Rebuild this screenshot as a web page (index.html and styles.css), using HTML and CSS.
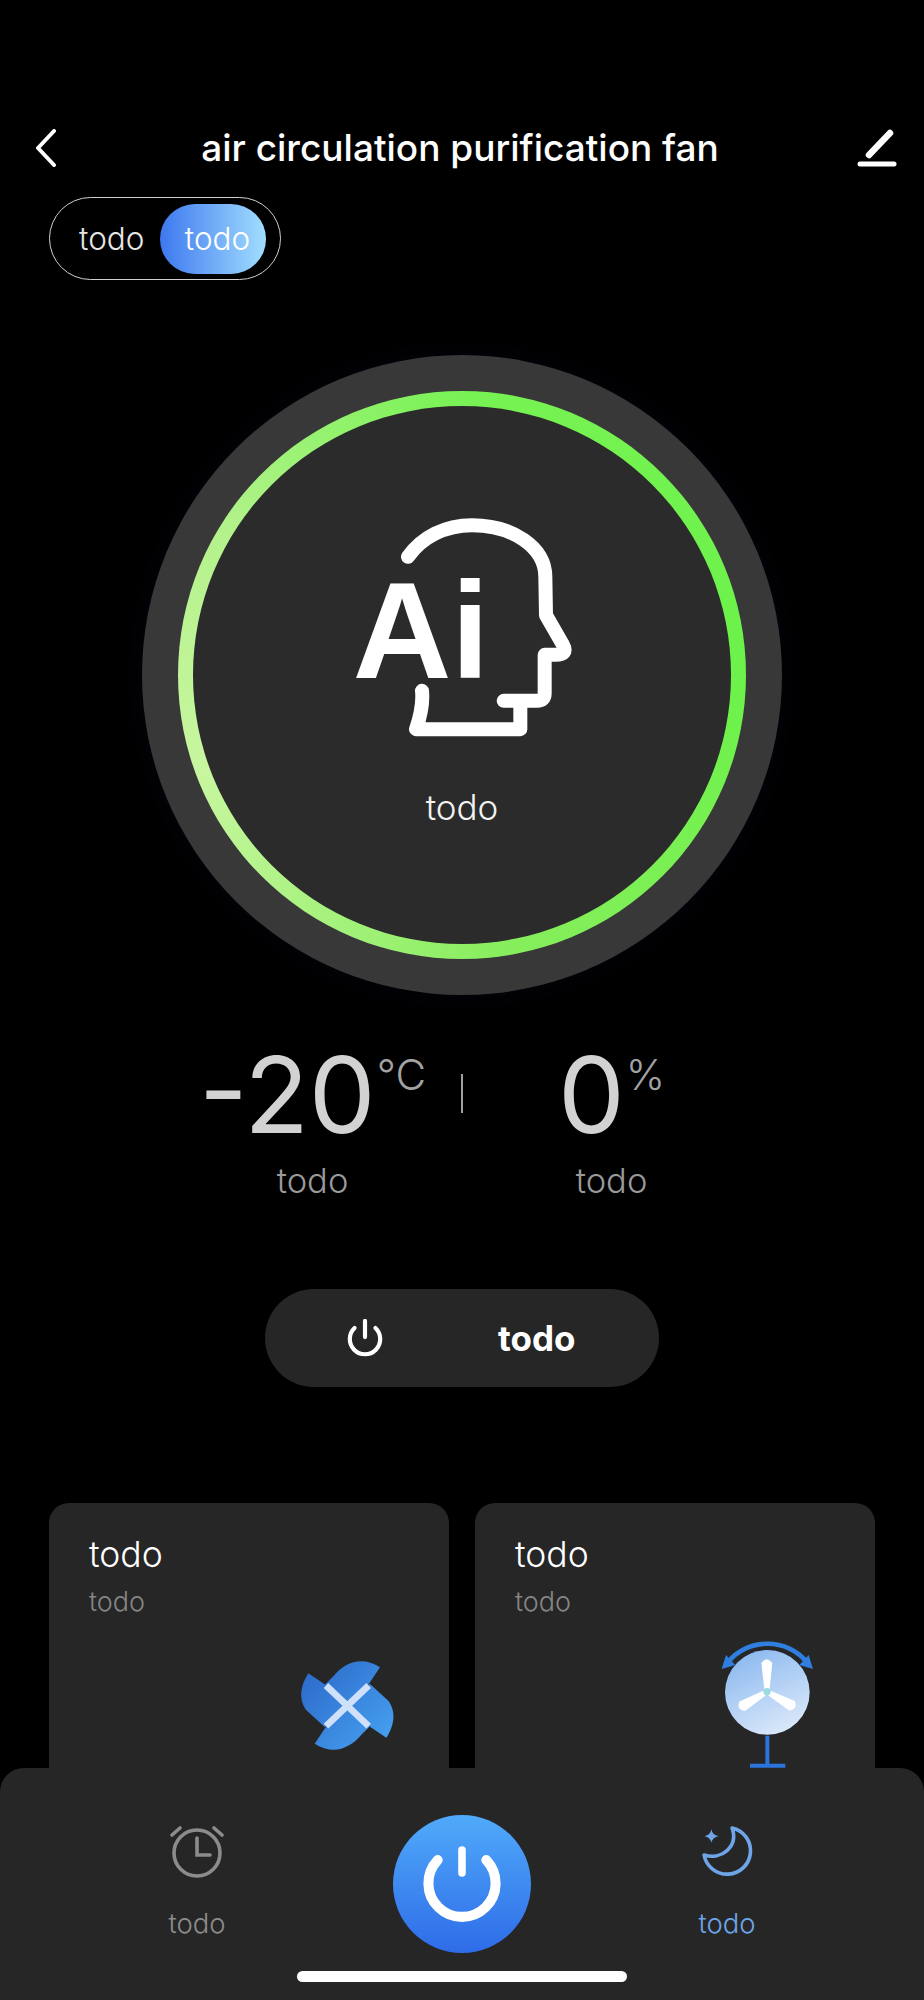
FILE: index.html
```html
<!DOCTYPE html>
<html lang="en">
<head>
    <meta charset="UTF-8">
    <title>air circulation purification fan</title>
    <link rel="stylesheet" href="styles.css">
</head>
<body>
<div class="page">
    <header class="topbar">
        <svg class="back-icon" viewBox="0 0 22 38"><path d="M19 2 L3 19 L19 36"/></svg>
        <h1 class="title">air circulation purification fan</h1>
        <svg class="edit-icon" viewBox="0 0 40 40"><path class="pen" d="M33 5 L12 27"/><path class="line" d="M3 36 H37"/></svg>
    </header>

    <div class="mode-toggle">
        <span class="mode-item">todo</span>
        <span class="mode-item active">todo</span>
    </div>

    <section class="dial">
        <div class="dial-ring">
            <div class="dial-inner">
                <svg class="ai-icon" viewBox="0 0 840 770">
                    <text class="ai-text" x="98" y="565">Ai</text>
                    <path class="head" d="M264 200 C306 140 376 105 456 105 C576 105 676 170 676 260 L678 375 L728 462 C741 485 731 494 706 494 L674 494 L674 610 Q674 632 651 632 L551 632"/>
                    <path class="head" d="M306 602 Q311 650 288 717 L601 717 L601 640"/>
                </svg>
                <span class="dial-label">todo</span>
            </div>
        </div>
    </section>

    <section class="stats">
        <div class="stat">
            <div class="stat-value">-20<span class="stat-unit">°C</span></div>
            <div class="stat-label">todo</div>
        </div>
        <div class="stat-divider"></div>
        <div class="stat">
            <div class="stat-value">0<span class="stat-unit">%</span></div>
            <div class="stat-label">todo</div>
        </div>
    </section>

    <div class="power-pill">
        <svg class="pill-icon" viewBox="0 0 40 40"><path d="M9 9.5 A16 16 0 1 0 31 9.5"/><path d="M20 2 V19"/></svg>
        <span class="pill-text">todo</span>
    </div>

    <section class="cards">
        <div class="card">
            <div class="card-title">todo</div>
            <div class="card-sub">todo</div>
            <svg class="card-icon pinwheel" viewBox="60 40 345 320">
                <defs>
                    <linearGradient id="bladeBlue" gradientUnits="userSpaceOnUse" x1="100" y1="80" x2="360" y2="320">
                        <stop offset="0" stop-color="#2c68c8"/>
                        <stop offset="1" stop-color="#46a2f2"/>
                    </linearGradient>
                </defs>
                <path fill="url(#bladeBlue)" d="M232 200 L165 137 L190 112 C225 70 275 50 330 85 L298 133 Z"/>
                <path fill="url(#bladeBlue)" d="M232 200 L165 137 L115 103 C85 150 90 190 110 215 L165 265 Z"/>
                <path fill="url(#bladeBlue)" d="M232 200 L299 263 L274 288 C239 330 189 350 134 315 L166 267 Z"/>
                <path fill="url(#bladeBlue)" d="M232 200 L299 263 L349 297 C379 250 374 210 354 185 L299 135 Z"/>
                <path class="pin-cross" d="M168 140 L296 262 M296 140 L168 262"/>
            </svg>
        </div>
        <div class="card">
            <div class="card-title">todo</div>
            <div class="card-sub">todo</div>
            <svg class="card-icon swing" viewBox="60 0 345 390">
                <defs>
                    <linearGradient id="fanFace" x1="0.2" y1="0" x2="0.7" y2="1">
                        <stop offset="0" stop-color="#8ab8ef"/>
                        <stop offset="1" stop-color="#dce9fa"/>
                    </linearGradient>
                </defs>
                <circle cx="232" cy="160" r="127" fill="url(#fanFace)"/>
                <path class="fan-blade" d="M214 72 Q230 50 247 72 L239 150 L223 150 Z"/>
                <path class="fan-blade" d="M214 72 Q230 50 247 72 L239 150 L223 150 Z" transform="rotate(120 231 158)"/>
                <path class="fan-blade" d="M214 72 Q230 50 247 72 L239 150 L223 150 Z" transform="rotate(240 231 158)"/>
                <circle cx="231" cy="158" r="11" fill="#9adbe2"/>
                <path class="swing-arc" d="M112 72 C170 -5 295 -5 352 72"/>
                <path class="swing-head" d="M95 90 L108 48 L136 78 Z"/>
                <path class="swing-head" d="M369 90 L356 48 L328 78 Z"/>
                <path class="stand" d="M232 290 V380 M180 380 H286"/>
            </svg>
        </div>
    </section>

    <nav class="bottom-bar">
        <div class="nav-item">
            <svg class="nav-icon alarm" viewBox="0 0 56 56">
                <circle cx="28" cy="30" r="23"/>
                <path d="M28 15 V32 H41"/>
                <path d="M3 12 L11 5 M53 12 L45 5"/>
            </svg>
            <span class="nav-label">todo</span>
        </div>
        <button class="main-power">
            <svg viewBox="0 0 100 100"><path class="arc" d="M21 21.6 A40 40 0 1 0 79 21.6"/><path class="bar" d="M50 9.5 V37"/></svg>
        </button>
        <div class="nav-item night">
            <svg class="nav-icon moon" viewBox="990 165 165 170">
                <path d="M1088 180 A71 71 0 1 1 1003 262 C1055 278 1108 238 1088 180 Z"/>
                <path class="star" d="M1025 184 Q1028 202 1047 205 Q1028 208 1025 226 Q1022 208 1004 205 Q1022 202 1025 184 Z"/>
            </svg>
            <span class="nav-label">todo</span>
        </div>
        <div class="home-indicator"></div>
    </nav>
</div>
</body>
</html>
```

FILE: styles.css
```css
* {
    box-sizing: border-box;
}

body {
    margin: 0;
    background: #000;
    font-family: "Inter", "Noto Sans", sans-serif;
    color: #fff;
}

.page {
    position: relative;
    width: 924px;
    height: 2000px;
    overflow: hidden;
    background: #000;
}

/* top bar */
.topbar {
    display: flex;
    align-items: center;
    height: 40px;
    margin-top: 128px;
    padding: 0 27px 0 35px;
}

.back-icon {
    flex: none;
    width: 22px;
    height: 38px;
    fill: none;
    stroke: #fff;
    stroke-width: 4;
    stroke-linecap: round;
    stroke-linejoin: round;
}

.title {
    flex: 1;
    margin: 0 0 0 6px;
    font-size: 37px;
    font-weight: 500;
    line-height: 40px;
    text-align: center;
    white-space: nowrap;
    color: #fff;
}

.edit-icon {
    flex: none;
    width: 40px;
    height: 40px;
    fill: none;
    stroke: #fff;
    stroke-linecap: round;
}

.edit-icon .pen {
    stroke-width: 6.5;
}

.edit-icon .line {
    stroke-width: 5;
}

/* mode switch */
.mode-toggle {
    display: flex;
    align-items: center;
    justify-content: space-between;
    width: 232px;
    height: 83px;
    margin: 29px 0 0 49px;
    padding: 0 14px 0 29px;
    border: 1.5px solid #d0d0d0;
    border-radius: 42px;
}

.mode-item {
    font-size: 31.5px;
    font-weight: 300;
    color: #e6e6e6;
}

.mode-item.active {
    display: flex;
    align-items: center;
    justify-content: center;
    width: 106px;
    height: 70px;
    padding-left: 9px;
    border-radius: 35px;
    background: linear-gradient(90deg, #3d78ef, #a2deff);
    color: #fff;
}

/* big dial */
.dial {
    display: flex;
    align-items: center;
    justify-content: center;
    width: 640px;
    height: 640px;
    margin: 75px auto 0;
    border-radius: 50%;
    background: #383838;
    box-shadow: 0 0 30px rgba(20, 30, 70, 0.18);
}

.dial-ring {
    width: 568px;
    height: 568px;
    padding: 15px;
    border-radius: 50%;
    background: conic-gradient(#78f254 0deg, #6cf24a 90deg, #86ee5c 170deg, #c8f6a0 250deg, #b4f28c 300deg, #78f254 360deg);
}

.dial-inner {
    display: flex;
    flex-direction: column;
    align-items: center;
    width: 100%;
    height: 100%;
    padding-top: 84px;
    border-radius: 50%;
    background: #2b2b2b;
}

.ai-icon {
    flex: none;
    width: 280px;
    height: 257px;
    margin-left: -4px;
}

.ai-text {
    font-family: "Liberation Sans", sans-serif;
    font-size: 410px;
    font-weight: 700;
    fill: #fff;
}

.head {
    fill: none;
    stroke: #fff;
    stroke-width: 42;
    stroke-linecap: round;
    stroke-linejoin: round;
}

.dial-label {
    margin-top: 40px;
    font-size: 35px;
    font-weight: 300;
    line-height: 40px;
    color: #f2f2f2;
}

/* readings */
.stats {
    display: flex;
    justify-content: center;
    align-items: flex-start;
    margin-top: 35px;
}

.stat {
    width: 297px;
    text-align: center;
}

.stat-value {
    display: flex;
    justify-content: center;
    align-items: flex-start;
    font-size: 106px;
    font-weight: 400;
    line-height: 130px;
    color: #d2d2d2;
}

.stat-unit {
    margin: 20px 0 0 1px;
    font-size: 42px;
    font-weight: 300;
    line-height: 50px;
    color: #a2a2a2;
}

.stat-label {
    margin-top: 1px;
    font-size: 34.5px;
    font-weight: 300;
    line-height: 40px;
    color: #9a9a9a;
}

.stat-divider {
    flex: none;
    width: 2px;
    height: 39px;
    margin-top: 44px;
    background: #a0a0a0;
}

/* power pill */
.power-pill {
    display: flex;
    align-items: center;
    width: 394px;
    height: 98px;
    margin: 88px auto 0;
    padding-left: 81px;
    border-radius: 49px;
    background: #262626;
}

.pill-icon {
    width: 38px;
    height: 38px;
    fill: none;
    stroke: #fff;
    stroke-width: 4.4;
    stroke-linecap: round;
}

.pill-text {
    margin-left: 114px;
    font-size: 35px;
    font-weight: 700;
}

/* feature cards */
.cards {
    display: flex;
    gap: 26px;
    margin: 116px 0 0 49px;
}

.card {
    position: relative;
    width: 400px;
    height: 300px;
    padding: 32px 0 0 40px;
    border-radius: 20px;
    background: #262626;
}

.card-title {
    font-size: 35.5px;
    font-weight: 300;
    line-height: 40px;
    color: #fff;
}

.card-sub {
    margin-top: 12px;
    font-size: 27px;
    font-weight: 300;
    line-height: 30px;
    color: #858585;
}

.card-icon {
    position: absolute;
}

.pinwheel {
    left: 241px;
    top: 149px;
    width: 115px;
    height: 107px;
}

.swing {
    left: 235px;
    top: 136px;
    width: 115px;
    height: 130px;
}

.pin-cross {
    fill: none;
    stroke: #cfe0fb;
    stroke-width: 20;
}

.fan-blade {
    fill: #fff;
}

.swing-arc {
    fill: none;
    stroke: #2f7ee0;
    stroke-width: 14;
}

.swing-head {
    fill: #2f7ee0;
}

.stand {
    fill: none;
    stroke: #2a74dc;
    stroke-width: 12;
}

/* bottom bar */
.bottom-bar {
    position: absolute;
    left: 0;
    bottom: 0;
    display: grid;
    grid-template-columns: 138px 138px 138px;
    column-gap: 127px;
    justify-content: center;
    width: 100%;
    height: 232px;
    padding-top: 47px;
    border-radius: 24px 24px 0 0;
    background: #262626;
}

.nav-item {
    display: flex;
    flex-direction: column;
    align-items: center;
    padding-top: 8px;
    color: #8c8c8c;
}

.nav-item.night {
    color: #6ea5e8;
}

.nav-icon {
    width: 56px;
    height: 56px;
}

.alarm {
    fill: none;
    stroke: currentColor;
    stroke-width: 3.6;
    stroke-linecap: round;
}

.moon {
    fill: none;
    stroke: currentColor;
    stroke-width: 11;
    stroke-linejoin: round;
}

.moon .star {
    fill: currentColor;
    stroke: none;
}

.nav-label {
    margin-top: 27px;
    font-size: 27.5px;
    font-weight: 300;
    line-height: 34px;
}

.main-power {
    width: 138px;
    height: 138px;
    padding: 0;
    border: none;
    border-radius: 50%;
    background: linear-gradient(180deg, #50aafa, #2e6ce8);
}

.main-power svg {
    display: block;
    width: 84px;
    height: 84px;
    margin: 0 auto;
    fill: none;
    stroke: #fff;
    stroke-linecap: round;
}

.main-power .arc {
    stroke-width: 12;
}

.main-power .bar {
    stroke-width: 9;
}

.home-indicator {
    position: absolute;
    left: 297px;
    bottom: 18px;
    width: 330px;
    height: 11px;
    border-radius: 6px;
    background: #fff;
}
```
